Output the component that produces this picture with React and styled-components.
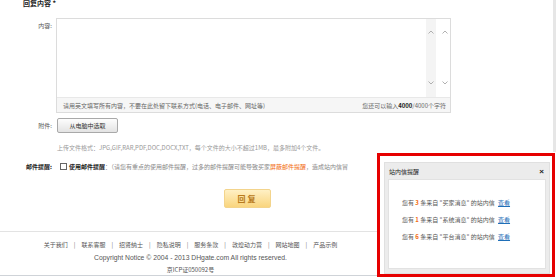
import React from "react";
import styled, { createGlobalStyle } from "styled-components";

const GlobalStyle = createGlobalStyle`
  html, body {
    margin: 0;
    padding: 0;
    background: #fff;
    overflow: hidden;
  }
  body {
    font-family: "Noto Sans CJK SC", "Liberation Sans", sans-serif;
    font-size: 6px;
    color: #333;
  }
`;

const links = ["关于我们", "联系客服", "招贤纳士", "隐私说明", "服务条款", "敦煌动力营", "网站地图", "产品示例"];

const messages = [
  { count: 3, from: "买家消息" },
  { count: 1, from: "系统消息" },
  { count: 6, from: "平台消息" },
];

const Chevron = ({ up }) => (
  <svg width="6" height="4" viewBox="0 0 6 4">
    <path
      d={up ? "M0.5 3.5 L3 1 L5.5 3.5" : "M0.5 0.5 L3 3 L5.5 0.5"}
      fill="none"
      stroke="#a8a8a8"
      strokeWidth="0.9"
    />
  </svg>
);

export default function App() {
  return (
    <Page>
      <GlobalStyle />
      <Main>
        <SectionTitle>回复内容 *</SectionTitle>

        <Row $top={10}>
          <Label $pad={4}>内容:</Label>
          <Editor>
            <EditArea>
              <Typing />
              <ScrollCol $shade>
                <Chevron up />
                <Chevron />
              </ScrollCol>
              <ScrollCol>
                <Chevron up />
                <Chevron />
              </ScrollCol>
            </EditArea>
            <EditorBar>
              <span>请用英文填写所有内容，不要在此处留下联系方式(电话、电子邮件、网址等)</span>
              <span>
                您还可以输入<b>4000</b>/4000个字符
              </span>
            </EditorBar>
          </Editor>
        </Row>

        <Row $top={5} $center>
          <Label>附件:</Label>
          <PickButton>从电脑中选取</PickButton>
        </Row>

        <Hint>上传文件格式：JPG,GIF,RAR,PDF,DOC,DOCX,TXT，每个文件的大小不超过1MB，最多附加4个文件。</Hint>

        <Row $top={10} $center $clip={384}>
          <Label $bold $wide>邮件提醒:</Label>
          <Check />
          <CheckText>使用邮件提醒</CheckText>
          <Muted>
            ：（请您有重点的使用邮件提醒，过多的邮件提醒可能导致买家<Orange>屏蔽邮件提醒</Orange>，造成站内信冒
          </Muted>
        </Row>

        <ReplyButton>回复</ReplyButton>

        <Footer>
          <LinkRow>
            {links.map((l, i) => (
              <React.Fragment key={l}>
                {i > 0 && <Sep>|</Sep>}
                <span>{l}</span>
              </React.Fragment>
            ))}
          </LinkRow>
          <Copy>Copyright Notice © 2004 - 2013 DHgate.com All rights reserved.</Copy>
          <Icp>京ICP证050092号</Icp>
        </Footer>
      </Main>
      <Track />

      <Highlight>
        <Popup>
          <PopupHead>
            <span>站内信提醒</span>
            <Close>×</Close>
          </PopupHead>
          <PopupBody>
            {messages.map((m) => (
              <Msg key={m.from}>
                您有 <Num>{m.count}</Num> 条来自 "{m.from}" 的站内信 <MsgLink>查看</MsgLink>
              </Msg>
            ))}
          </PopupBody>
        </Popup>
      </Highlight>
    </Page>
  );
}

const Page = styled.div`
  position: relative;
  width: 558px;
  height: 278px;
  overflow: hidden;
  display: flex;
`;

const Main = styled.div`
  width: 553px;
  display: flex;
  flex-direction: column;
`;

const Track = styled.div`
  width: 3px;
  height: 152px;
  background: #e6e6e6;
`;

const SectionTitle = styled.div`
  margin-top: -1px;
  padding-left: 23px;
  font-size: 7px;
  line-height: 9px;
  font-weight: bold;
  color: #222;
`;

const Row = styled.div`
  display: flex;
  align-items: ${(p) => (p.$center ? "center" : "flex-start")};
  margin-top: ${(p) => p.$top || 0}px;
  ${(p) => p.$clip && `width: ${p.$clip}px; overflow: hidden;`}
`;

const Label = styled.div`
  width: ${(p) => (p.$wide ? 58 : 56)}px;
  flex-shrink: 0;
  box-sizing: border-box;
  padding-right: ${(p) => (p.$wide ? 6 : 4)}px;
  padding-top: ${(p) => p.$pad || 0}px;
  text-align: right;
  font-weight: ${(p) => (p.$bold ? "bold" : "normal")};
  color: ${(p) => (p.$bold ? "#222" : "#555")};
  line-height: 8px;
`;

const Editor = styled.div`
  width: 395px;
  height: 95px;
  box-sizing: border-box;
  border: 1px solid #dcdcdc;
  display: flex;
  flex-direction: column;
`;

const EditArea = styled.div`
  flex: 1;
  display: flex;
`;

const Typing = styled.div`
  flex: 1;
`;

const ScrollCol = styled.div`
  width: 10px;
  margin-right: ${(p) => (p.$shade ? 4 : 0)}px;
  background: ${(p) => (p.$shade ? "#f4f4f4" : "#fff")};
  display: flex;
  flex-direction: column;
  justify-content: space-between;
  align-items: center;
  padding: 11px 0 12px;
`;

const EditorBar = styled.div`
  height: 15px;
  box-sizing: border-box;
  background: #f6f6f6;
  border-top: 1px solid #e8e8e8;
  display: flex;
  align-items: center;
  justify-content: space-between;
  padding: 0 4px 0 6px;
  color: #666;
  b {
    color: #222;
  }
`;

const PickButton = styled.div`
  width: 61px;
  height: 15px;
  margin-left: 1px;
  box-sizing: border-box;
  border: 1px solid #a9a9a9;
  border-radius: 2px;
  background: linear-gradient(#fdfdfd, #e3e3e3);
  display: flex;
  align-items: center;
  justify-content: center;
  color: #333;
`;

const Hint = styled.div`
  margin-top: 11px;
  padding-left: 57px;
  color: #999;
  line-height: 8px;
`;

const Check = styled.div`
  width: 7px;
  height: 7px;
  flex-shrink: 0;
  box-sizing: border-box;
  border: 1px solid #666;
  background: #fff;
  margin-left: 2px;
`;

const CheckText = styled.span`
  margin-left: 2px;
  font-weight: bold;
  color: #222;
  white-space: nowrap;
`;

const Muted = styled.span`
  color: #888;
  white-space: nowrap;
`;

const Orange = styled.span`
  color: #f26a10;
`;

const ReplyButton = styled.div`
  margin: 18px 0 0 224px;
  width: 47px;
  height: 19px;
  box-sizing: border-box;
  border: 1px solid #f3d48c;
  border-radius: 2px;
  background: linear-gradient(#fff0c4, #f9d57e);
  display: flex;
  align-items: center;
  justify-content: center;
  color: #b87a1c;
  font-size: 8px;
  font-weight: bold;
  letter-spacing: 2px;
`;

const Footer = styled.div`
  margin-top: 23px;
  border-top: 1px solid #e3e3e3;
  border-bottom: 1px solid #cfd3d8;
  width: 553px;
  padding: 9px 172px 1px 0;
  display: flex;
  flex-direction: column;
  align-items: center;
  box-sizing: border-box;
  color: #555;
`;

const LinkRow = styled.div`
  display: flex;
  gap: 6px;
  line-height: 8px;
  white-space: nowrap;
`;

const Sep = styled.span`
  color: #777;
`;

const Copy = styled.div`
  margin-top: 5px;
  font-family: "Liberation Sans", sans-serif;
  font-size: 6.8px;
  line-height: 8px;
`;

const Icp = styled.div`
  margin-top: 4px;
  line-height: 8px;
`;

const Highlight = styled.div`
  position: absolute;
  left: 377px;
  top: 153px;
  width: 178px;
  height: 124px;
  box-sizing: border-box;
  border: 3px solid #e60000;
  background: #fff;
  padding: 6px 2px 0 4px;
`;

const Popup = styled.div`
  height: 112px;
  background: #ececec;
  border: 1px solid #e0e0e0;
  box-sizing: border-box;
  padding: 0 3px 4px 3px;
  display: flex;
  flex-direction: column;
`;

const PopupHead = styled.div`
  height: 16px;
  display: flex;
  align-items: center;
  justify-content: space-between;
  padding: 0 2px 0 1px;
  color: #222;
`;

const Close = styled.span`
  font-family: "Liberation Sans", sans-serif;
  font-size: 8px;
  font-weight: bold;
`;

const PopupBody = styled.div`
  flex: 1;
  background: #fff;
  border: 1px solid #e2e2e2;
  padding: 19px 0 0 13px;
  display: flex;
  flex-direction: column;
  gap: 9px;
`;

const Msg = styled.div`
  line-height: 8px;
  color: #555;
  white-space: nowrap;
`;

const Num = styled.span`
  color: #f26a10;
  font-weight: bold;
`;

const MsgLink = styled.span`
  color: #1f6fb8;
  text-decoration: underline;
  margin-left: 2px;
`;
